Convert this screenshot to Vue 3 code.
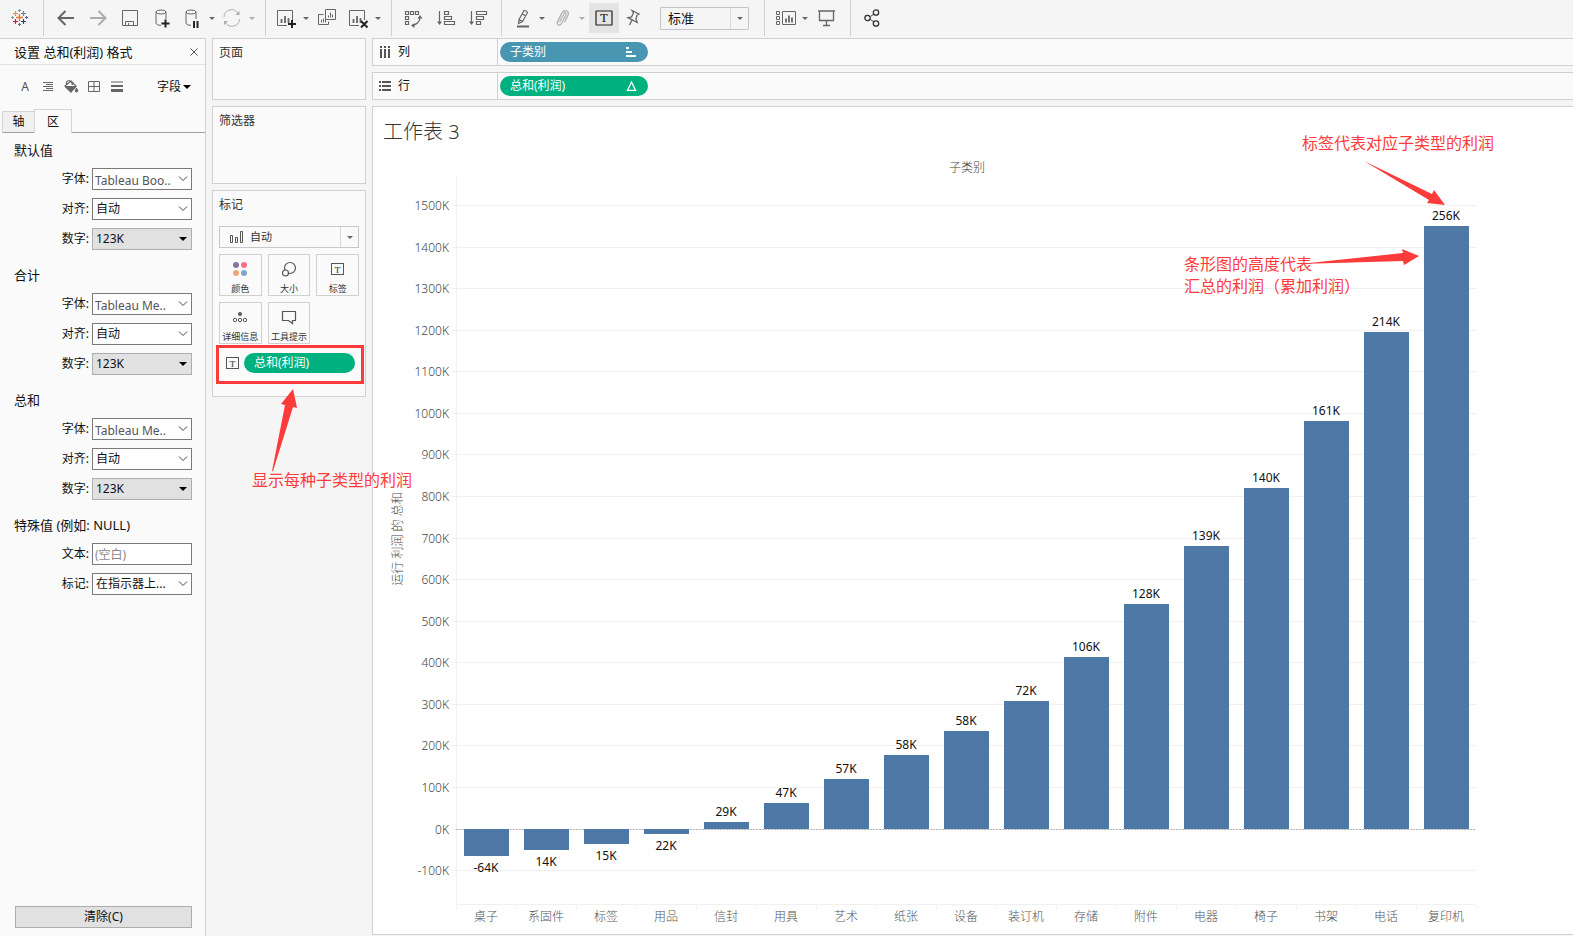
<template>
  <div class="workbook">
    <header class="toolbar">
      <div v-for="(group, g) in toolbar" :key="g" class="tool-group">
        <template v-for="(tool, t) in group" :key="t">
          <div v-if="tool.fit" class="fit-box">
            <select class="fit-select" aria-label="适合">
              <option>标准</option>
            </select>
            <span class="fit-arrow"><i class="caret"></i></span>
          </div>
          <template v-else>
            <button
              class="tool-btn"
              :class="{ split: tool.menu, faded: tool.faded, active: tool.active }"
              :aria-label="tool.name"
            >
              <svg class="icon" viewBox="0 0 24 24" v-html="icons[tool.icon]"></svg>
            </button>
            <button v-if="tool.menu" class="caret-btn" :class="{ faded: tool.faded }" :aria-label="tool.name + '菜单'">
              <i class="caret"></i>
            </button>
          </template>
        </template>
      </div>
    </header>

    <div class="workspace">
      <aside class="format-panel">
        <div class="format-header">
          <span>设置 总和(利润) 格式</span>
          <button class="close-btn" aria-label="关闭">
            <svg class="close-icon" viewBox="0 0 8 8"><path d="M0.5 0.5l7 7M7.5 0.5l-7 7" /></svg>
          </button>
        </div>

        <div class="format-tools">
          <button v-for="name in formatTools" :key="name" class="format-btn" :aria-label="name">
            <svg class="format-icon" viewBox="0 0 16 16" v-html="icons[name]"></svg>
          </button>
          <button class="field-btn">字段<i class="caret dark"></i></button>
        </div>

        <div class="tabs">
          <button class="tab">轴</button>
          <button class="tab selected">区</button>
          <span class="tab-rest"></span>
        </div>

        <section v-for="(section, s) in sections" :key="section.title" class="format-section">
          <h3>{{ section.title }}</h3>
          <div v-for="(row, r) in section.rows" :key="row.label" class="format-row">
            <label :for="`format-${s}-${r}`">{{ row.label }}:</label>
            <input v-if="row.input" :id="`format-${s}-${r}`" type="text" class="format-input" :placeholder="row.input" />
            <div v-else class="select-box">
              <select :id="`format-${s}-${r}`" :class="{ grey: row.grey, face: row.face }">
                <option>{{ row.value }}</option>
              </select>
              <i v-if="row.grey" class="caret dark"></i>
              <svg v-else class="chevron" viewBox="0 0 10 6"><path d="M1 0.5l4 4 4-4" /></svg>
            </div>
          </div>
        </section>

        <button class="clear-btn">清除(C)</button>
      </aside>

      <div class="cards">
        <section class="card pages"><h3>页面</h3></section>
        <section class="card filters"><h3>筛选器</h3></section>
        <section class="card marks">
          <h3>标记</h3>
          <div class="mark-type">
            <svg class="mark-bars" viewBox="0 0 14 12">
              <path d="M0.5 4.5h2v7h-2zM5.5 6.5h2v5h-2zM10.5 0.5h2v11h-2z" />
            </svg>
            <select aria-label="标记类型">
              <option>自动</option>
            </select>
            <span class="mark-arrow"><i class="caret"></i></span>
          </div>
          <div class="mark-grid">
            <button v-for="mark in marks" :key="mark.name" class="mark-btn">
              <svg class="mark-icon" viewBox="0 0 16 16" v-html="icons[mark.icon]"></svg>
              <span>{{ mark.name }}</span>
            </button>
          </div>
          <div class="mark-field">
            <svg class="mark-icon" viewBox="0 0 16 16" v-html="icons.label"></svg>
            <button class="pill green">总和(利润)</button>
          </div>
          <svg class="note">
            <rect x="4.5" y="155.5" width="145" height="36" fill="none" stroke="#fd3b3a" stroke-width="3" />
            <path d="M59 280L72 214 68 213 80 198 84 217 80 216 60 280z" />
            <text x="39" y="295">显示每种子类型的利润</text>
          </svg>
        </section>
      </div>

      <main class="view">
        <div class="shelf">
          <div class="shelf-name">
            <svg class="shelf-icon" viewBox="0 0 12 12"><path d="M1 0h2v2h-2zM5 0h2v2h-2zM9 0h2v2h-2zM1 3h2v9h-2zM5 3h2v9h-2zM9 3h2v9h-2z" /></svg>
            列
          </div>
          <button class="pill blue">
            子类别
            <svg class="pill-icon" viewBox="0 0 11 10"><path d="M0 0h3v2h-3zM0 4h6v2h-6zM0 8h10v2h-10z" fill="#fff" /></svg>
          </button>
        </div>
        <div class="shelf">
          <div class="shelf-name">
            <svg class="shelf-icon" viewBox="0 0 12 12"><path d="M0 1h2v2h-2zM0 5h2v2h-2zM0 9h2v2h-2zM3 1h9v2h-9zM3 5h9v2h-9zM3 9h9v2h-9z" /></svg>
            行
          </div>
          <button class="pill green">
            总和(利润)
            <svg class="pill-icon" viewBox="0 0 11 10"><path d="M5.5 1L9.5 9.3h-8z" fill="none" stroke="#fff" stroke-width="1.3" /></svg>
          </button>
        </div>

        <div class="sheet">
          <h2>工作表 3</h2>
          <svg class="chart" width="1130" height="776">
            <text class="axis-title" x="594" y="15">子类别</text>
            <text class="axis-title" transform="translate(29 382) rotate(-90)">运行 利润 的 总和</text>
            <g v-for="tick in ticks" :key="tick">
              <line class="grid" x1="79" x2="1103" :y1="crisp(tick)" :y2="crisp(tick)" />
              <text class="tick" x="76" :y="crisp(tick) + 4.5">{{ tick }}K</text>
            </g>
            <path class="grid" d="M83.5 20V752M83 747.5H1103" />
            <line class="zero" x1="83" x2="1103" :y1="crisp(0)" :y2="crisp(0)" />
            <g v-for="(bar, i) in bars" :key="bar.name">
              <rect class="bar" :x="91 + i * 60" :y="Math.round(yOf(Math.max(bar.total, 0)))" width="45" :height="Math.round(Math.abs(bar.total) * unit)" />
              <text class="value" :x="113 + i * 60" :y="labelY(bar.total)">{{ bar.label }}</text>
              <line class="grid" :x1="143.5 + i * 60" :x2="143.5 + i * 60" y1="748" y2="752" />
              <text class="category" :x="113 + i * 60" y="764">{{ bar.name }}</text>
            </g>
          </svg>
          <svg class="note sheet-note">
            <text x="929" y="42">标签代表对应子类型的利润</text>
            <path d="M991 54L1059 87 1061 83 1072 98 1054 96 1056 93z" />
            <text x="811" y="163">条形图的高度代表</text>
            <text x="811" y="185">汇总的利润（累加利润）</text>
            <path d="M927 157L1030 146 1029 142 1046 149 1031 158 1030 154z" />
          </svg>
        </div>
      </main>
    </div>
  </div>
</template>

<script setup>
const toolbar = [
  [{ icon: 'logo', name: '起始页' }],
  [
    { icon: 'back', name: '撤消' },
    { icon: 'forward', name: '重做', faded: true },
    { icon: 'save', name: '保存' },
    { icon: 'addData', name: '新建数据源' },
    { icon: 'pause', name: '暂停自动更新', menu: true },
    { icon: 'refresh', name: '运行更新', menu: true, faded: true },
  ],
  [
    { icon: 'newSheet', name: '新建工作表', menu: true },
    { icon: 'duplicate', name: '复制' },
    { icon: 'clearSheet', name: '清除工作表', menu: true },
  ],
  [
    { icon: 'swap', name: '交换行和列' },
    { icon: 'sortAsc', name: '升序排序' },
    { icon: 'sortDesc', name: '降序排序' },
  ],
  [
    { icon: 'pen', name: '突出显示', menu: true },
    { icon: 'clip', name: '组成员', menu: true, faded: true },
    { icon: 'text', name: '显示标记标签', active: true },
    { icon: 'pin', name: '固定轴' },
    { fit: true },
  ],
  [
    { icon: 'showCards', name: '显示卡', menu: true },
    { icon: 'present', name: '演示模式' },
  ],
  [{ icon: 'share', name: '共享' }],
]

const cylinder = '<ellipse cx="11" cy="6" rx="5" ry="2"/><path d="M6 6v11c0 1.5 2 2.3 5 2.3M16 6v7"/>'
const sheetBars = '<path d="M7.5 17v-4M11 17v-7M14.5 17v-5" stroke-width="1.8"/>'

const icons = {
  logo: `
    <path d="M11.5 8v7M8 11.5h7" stroke="#e8762d" stroke-width="1.4"/>
    <path d="M7.5 5v5M5 7.5h5" stroke="#eb912c" stroke-width="1.2"/>
    <path d="M15.5 5v5M13 7.5h5" stroke="#59879b" stroke-width="1.2"/>
    <path d="M7.5 13v5M5 15.5h5" stroke="#c72037" stroke-width="1.2"/>
    <path d="M15.5 13v5M13 15.5h5" stroke="#1f447e" stroke-width="1.2"/>
    <path d="M11.5 3v3M10 4.5h3M4.5 10v3M3 11.5h3" stroke="#7099a6"/>
    <path d="M18.5 10v3M17 11.5h3M11.5 17v3M10 18.5h3" stroke="#5c6692"/>`,
  back: '<path d="M20 12H5M11.5 5l-7 7 7 7" stroke-width="2"/>',
  forward: '<path d="M4 12h15M12.5 5l7 7-7 7" stroke-width="2"/>',
  save: '<path d="M4.5 4.5h15v15h-15zM7.5 19.5v-4h8v4M10.5 17v2.5"/>',
  addData: cylinder + '<path d="M15.5 13.5v8M11.5 17.5h8" stroke="#222" stroke-width="2"/>',
  pause: cylinder + '<path d="M14 15v7M17.5 15v7" stroke="#222" stroke-width="2"/>',
  refresh: '<path d="M4 11a7.5 7.5 0 0 1 14-3.5M19.5 13a7.5 7.5 0 0 1-14 3.5"/><path d="M19.5 5v4h-4zM4 19v-4h4z" fill="currentColor" stroke="none"/>',
  newSheet: '<path d="M13 19.5H3.5v-15h15V14"/>' + sheetBars + '<path d="M18 14v8M14 18h8" stroke="#222" stroke-width="2"/>',
  duplicate: '<path d="M9.500 3.5h10v10h-10zM7.5 8.5h-5v10h10v-3M12.5 11.5v-2M14.5 11.5v-5M16.5 11.5v-3M5.5 16.5v-3M7.5 16.5v-4M9.5 16.5v-3"/>',
  clearSheet: '<path d="M13 19.5H3.5v-15h15V14"/>' + sheetBars + '<path d="M15 15l6.5 6.5M21.5 15L15 21.5" stroke="#222" stroke-width="2"/>',
  swap: '<path d="M3.5 5.5h3v3h-3zM8.5 5.5h3v3h-3zM13.5 5.5h3v3h-3zM3.5 10.5h3v3h-3zM3.5 15.5h3v3h-3zM18 11c0 4-3 7.500-8 8.500" stroke-width="1.2"/><path d="M15.500 12.500L18 9l2.500 3.500zM12.500 17l-3.500 2.500 3.500 2.500z" fill="currentColor" stroke="none"/>',
  sortAsc: '<path d="M5.5 5v13M10.5 5.5h4v3h-4zM10.5 10.5h7v3h-7zM10.5 15.5h10v3h-10z" stroke-width="1.2"/><path d="M3 15.5h5L5.5 19z" fill="currentColor" stroke="none"/>',
  sortDesc: '<path d="M5.5 5v13M10.5 5.5h10v3h-10zM10.5 10.5h7v3h-7zM10.5 15.5h4v3h-4z" stroke-width="1.2"/><path d="M3 15.5h5L5.5 19z" fill="currentColor" stroke="none"/>',
  pen: '<path d="M14 4.5q2.500 0 3.500 2l-5 9-3.500-2zM9 13.500l-.5 4 4-2M12.500 8l3.500 2" stroke-width="1.2"/><path d="M7 20.5h12" stroke-width="2"/>',
  clip: '<path d="M9.500 16l4.500-8.500c1-1.700 3-.7 2 1.200l-4.500 8.800c-1.800 3-5.500 1.200-4-1.800l4.500-9c2.300-4 8-1.500 6 2.500l-3.500 7" stroke-width="1.2"/>',
  text: '<rect x="4" y="5" width="16" height="14" rx="0.5" stroke="#222" stroke-width="1.2"/><text x="12" y="16" font-family="Liberation Serif" font-size="12" text-anchor="middle" fill="#222" stroke="#222" stroke-width="0.2">T</text>',
  pin: '<path d="M8 4.500l7 3.500-2 1.200-1 4 1.200 3.300-9.200-4.800 3.500-.7 2-4zM8 14l-2.500 5" stroke-width="1.3"/>',
  showCards: '<path d="M3.5 5.5h3v3h-3zM3.5 10.5h3v3h-3zM3.5 15.5h3v3h-3zM9.5 5.5h13v13h-13z"/><path d="M13 16.5v-4M16 16.5v-7M19 16.5v-5" stroke-width="1.8"/>',
  present: '<path d="M3 5h17M4.5 5v9.5h14V5M11.5 14.5v5M8 19.5h7" stroke-width="1.3"/>',
  share: '<path d="M10.5 10.5l3.5-2.5M10.5 13.5l3.5 2.5" stroke="#333"/><g stroke="#333" stroke-width="1.3"><circle cx="16" cy="6.5" r="2.7"/><circle cx="7.5" cy="12" r="2.7"/><circle cx="16" cy="17.5" r="2.7"/></g>',
  font: '<text x="8" y="12" font-family="Noto Sans" font-size="12" text-anchor="middle" fill="#555" stroke="none">A</text>',
  align: '<path d="M3 3.5h10M6 5.5h7M3 7.5h10M6 9.5h7M3 11.5h10"/>',
  shading: '<path d="M2 7l6-5 5 5-5 6zM3.500 6V3q2-2.500 5 0l1 3" stroke-width="1.2"/><path d="M2 7.500h11l-5 5.500zM13.500 9q2.500 4 0 4t0-4z" fill="currentColor"/>',
  borders: '<path d="M2.5 2.5h11v10h-11zM8 2.5v10M2.5 7.5h11"/>',
  lines: '<path d="M2 3h12"/><path d="M2 7h12" stroke-width="2"/><path d="M2 11.5h12" stroke-width="3"/>',
  colour: '<g stroke="none"><circle cx="4" cy="4" r="3" fill="#8a73a0"/><circle cx="12" cy="4" r="3" fill="#fb7185"/><circle cx="4" cy="12" r="3" fill="#f2a57b"/><circle cx="12" cy="12" r="3" fill="#82a3ca"/></g>',
  size: '<circle cx="9" cy="7" r="5.5" stroke-width="1.2"/><circle cx="4.5" cy="12" r="3" fill="#fafafa" stroke-width="1.2"/>',
  label: '<rect x="1.5" y="2.5" width="12" height="11"/><text x="7.5" y="11.5" font-family="Liberation Serif" font-size="9" text-anchor="middle" fill="#444" stroke="#444" stroke-width="0.2">T</text>',
  detail: '<circle cx="8" cy="5" r="2" fill="currentColor" stroke="none"/><circle cx="3" cy="11" r="1.7"/><circle cx="8" cy="11" r="1.7"/><circle cx="13" cy="11" r="1.7"/>',
  tooltip: '<path d="M1.5 2.5h13v9h-3v3l-4-3h-6z" stroke-width="1.2"/>',
}

const formatTools = ['font', 'align', 'shading', 'borders', 'lines']

const formatRows = (font) => [
  { label: '字体', value: font, face: true },
  { label: '对齐', value: '自动' },
  { label: '数字', value: '123K', grey: true },
]

const sections = [
  { title: '默认值', rows: formatRows('Tableau Boo..') },
  { title: '合计', rows: formatRows('Tableau Me..') },
  { title: '总和', rows: formatRows('Tableau Me..') },
  {
    title: '特殊值 (例如: NULL)',
    rows: [
      { label: '文本', input: '(空白)' },
      { label: '标记', value: '在指示器上...' },
    ],
  },
]

const marks = [
  { name: '颜色', icon: 'colour' },
  { name: '大小', icon: 'size' },
  { name: '标签', icon: 'label' },
  { name: '详细信息', icon: 'detail' },
  { name: '工具提示', icon: 'tooltip' },
]

// total is the running sum of profit in thousands
const bars = [
  { name: '桌子', label: '-64K', total: -64 },
  { name: '系固件', label: '14K', total: -50 },
  { name: '标签', label: '15K', total: -35 },
  { name: '用品', label: '22K', total: -12 },
  { name: '信封', label: '29K', total: 17 },
  { name: '用具', label: '47K', total: 63 },
  { name: '艺术', label: '57K', total: 120 },
  { name: '纸张', label: '58K', total: 178 },
  { name: '设备', label: '58K', total: 236 },
  { name: '装订机', label: '72K', total: 308 },
  { name: '存储', label: '106K', total: 413 },
  { name: '附件', label: '128K', total: 541 },
  { name: '电器', label: '139K', total: 680 },
  { name: '椅子', label: '140K', total: 820 },
  { name: '书架', label: '161K', total: 981 },
  { name: '电话', label: '214K', total: 1195 },
  { name: '复印机', label: '256K', total: 1450 },
]

const ticks = Array.from({ length: 17 }, (_, i) => 1500 - i * 100)
const unit = 0.4157

const yOf = (value) => 672 - value * unit
const crisp = (value) => Math.floor(yOf(value)) + 0.5
const labelY = (total) => Math.round(yOf(total)) + (total < 0 ? 16 : -6)
</script>

<style>
body {
  margin: 0;
}
</style>

<style scoped>
.workbook {
  display: flex;
  flex-direction: column;
  min-height: 100vh;
  background: #f5f5f5;
  color: #111;
  font-family: 'Noto Sans', 'Noto Sans CJK SC', sans-serif;
  font-size: 12px;
  line-height: 20px;
  overflow: hidden;
}

button,
select,
input {
  margin: 0;
  padding: 0;
  border: none;
  border-radius: 0;
  background: none;
  color: inherit;
  font: inherit;
}

select {
  appearance: none;
}

h2,
h3 {
  margin: 0;
  font-size: 12px;
  font-weight: 400;
}

svg {
  display: block;
  fill: none;
}

.caret {
  border: 3px solid transparent;
  border-top-color: #666;
  border-bottom: none;
}

.caret.dark {
  border-width: 4px;
  border-top-color: #000;
  border-bottom: none;
}

/* toolbar */
.toolbar {
  display: flex;
  height: 36px;
  padding-bottom: 2px;
}

.tool-group {
  display: flex;
  align-items: center;
  gap: 2px;
  padding: 0 8px 0 7px;
  border-right: 1px solid #d0d0d0;
}

.tool-group:first-child {
  padding-left: 5px;
}

.tool-group:last-child {
  padding-left: 6px;
  border-right: none;
}

.tool-btn {
  display: flex;
  align-items: center;
  justify-content: center;
  width: 30px;
  height: 30px;
  color: #666;
}

.tool-btn.split {
  width: 26px;
}

.tool-btn.active {
  background: #e4e4e4;
}

.faded {
  opacity: 0.5;
}

.icon {
  flex: none;
  width: 24px;
  height: 24px;
  stroke: currentColor;
  overflow: visible;
}

.caret-btn {
  display: flex;
  align-items: center;
  justify-content: center;
  width: 10px;
  height: 30px;
}

.fit-box {
  display: flex;
  width: 87px;
  height: 21px;
  margin: 0 7px;
  border: 1px solid #c4c4c4;
  border-radius: 1px;
}

.fit-select {
  flex: 1;
  min-width: 0;
  padding-left: 7px;
  font-size: 13px;
  line-height: 20px;
}

.fit-arrow {
  display: flex;
  align-items: center;
  justify-content: center;
  width: 17px;
  border-left: 1px solid #d8d8d8;
}

/* format panel */
.workspace {
  display: flex;
  flex: 1;
}

.format-panel {
  display: flex;
  flex-direction: column;
  flex: none;
  box-sizing: border-box;
  width: 206px;
  padding-bottom: 8px;
  border-top: 1px solid #d0d0d0;
  border-right: 1px solid #d0d0d0;
  background: #fafafa;
}

.format-header {
  display: flex;
  align-items: center;
  justify-content: space-between;
  height: 25px;
  padding: 0 7px 0 14px;
  border-bottom: 1px solid #e2e2e2;
  font-size: 13px;
}

.close-icon {
  width: 8px;
  height: 8px;
  stroke: #555;
}

.format-tools {
  display: flex;
  align-items: center;
  gap: 7px;
  height: 44px;
  padding: 0 14px 0 17px;
}

.format-btn {
  color: #666;
}

.format-icon {
  width: 16px;
  height: 16px;
  stroke: currentColor;
}

.field-btn {
  display: flex;
  align-items: center;
  gap: 2px;
  margin-left: auto;
}

.tabs {
  display: flex;
  align-items: flex-end;
  height: 24px;
  padding-left: 2px;
}

.tab {
  box-sizing: border-box;
  width: 32px;
  height: 22px;
  border: 1px solid #d4d4d4;
  border-right: none;
  border-bottom-color: #a0a0a0;
  background: #f0f0f0;
}

.tab.selected {
  width: 38px;
  height: 24px;
  border-right: 1px solid #d4d4d4;
  border-bottom: none;
  background: #fafafa;
}

.tab-rest {
  flex: 1;
  border-bottom: 1px solid #a0a0a0;
}

.format-section {
  display: flex;
  flex-direction: column;
  gap: 8px;
  padding: 7px 13px 8px 14px;
}

.format-section h3 {
  font-size: 13px;
  line-height: 20px;
}

.format-row {
  display: flex;
  align-items: center;
  gap: 3px;
  height: 22px;
}

.format-row label {
  flex: 1;
  line-height: 22px;
  text-align: right;
}

.select-box {
  display: grid;
  align-items: center;
  width: 100px;
}

.select-box > * {
  grid-area: 1 / 1;
}

.select-box select,
.format-input {
  box-sizing: border-box;
  width: 100px;
  height: 22px;
  padding: 0 3px;
  border: 1px solid #7a7a7a;
  background: #fff;
}

.select-box select.grey {
  border-color: #adadad;
  background: #e1e1e1;
}

.select-box select.face {
  padding: 2px 2px 0;
  color: #555;
}

.format-input {
  padding: 0 2px;
}

.format-input::placeholder {
  color: #888;
}

.select-box .caret,
.chevron {
  justify-self: end;
  margin-right: 5px;
  pointer-events: none;
}

.chevron {
  width: 10px;
  height: 6px;
  margin-right: 4px;
  stroke: #444;
}

.clear-btn {
  height: 22px;
  margin: auto 13px 0 15px;
  border: 1px solid #adadad;
  background: #e1e1e1;
  line-height: 20px;
}

/* shelf cards */
.cards {
  display: flex;
  flex-direction: column;
  flex: none;
  gap: 6px;
  width: 154px;
  margin: 0 6px;
}

.card {
  box-sizing: border-box;
  padding: 4px 6px;
  border: 1px solid #d0d0d0;
  background: #fafafa;
  color: #333;
}

.pages {
  height: 62px;
}

.filters {
  height: 78px;
}

.marks {
  position: relative;
  height: 207px;
}

.mark-type {
  display: flex;
  align-items: center;
  box-sizing: border-box;
  height: 22px;
  margin: 11px 0 6px;
  padding-left: 10px;
  border: 1px solid #c8c8c8;
}

.mark-bars {
  width: 14px;
  height: 12px;
  stroke: #555;
}

.mark-type select {
  flex: 1;
  min-width: 0;
  padding-left: 6px;
  font-size: 11px;
  line-height: 18px;
}

.mark-arrow {
  display: flex;
  align-items: center;
  justify-content: center;
  width: 17px;
  height: 20px;
  border-left: 1px solid #d8d8d8;
}

.mark-grid {
  display: grid;
  grid-template-columns: repeat(3, 1fr);
  gap: 6px;
}

.mark-btn {
  display: flex;
  flex-direction: column;
  align-items: center;
  justify-content: space-between;
  height: 42px;
  padding-top: 6px;
  border: 1px solid #d0d0d0;
  font-size: 9px;
  line-height: 12px;
  white-space: nowrap;
}

.mark-icon {
  flex: none;
  width: 16px;
  height: 16px;
  color: #555;
  stroke: currentColor;
}

.mark-field {
  display: flex;
  align-items: center;
  gap: 3px;
  margin-top: 9px;
  padding: 0 4px 0 6px;
}

.pill {
  display: flex;
  align-items: center;
  justify-content: space-between;
  width: 148px;
  height: 20px;
  padding: 0 11px 1px 10px;
  border-radius: 10px;
  color: #fff;
}

.mark-field .pill {
  flex: 1;
}

.pill.green {
  background: #00b180;
}

.pill.blue {
  background: #4996b2;
}

.pill-icon {
  width: 11px;
  height: 10px;
}

.note {
  position: absolute;
  z-index: 2;
  top: 0;
  left: 0;
  overflow: visible;
  fill: #fd3b3a;
  font-size: 16px;
  pointer-events: none;
}

/* worksheet */
.view {
  display: flex;
  flex-direction: column;
  flex: 1;
  gap: 6px;
  min-width: 0;
}

.shelf {
  display: flex;
  align-items: center;
  gap: 2px;
  box-sizing: border-box;
  height: 28px;
  border: 1px solid #d0d0d0;
  border-right: none;
  background: #fafafa;
}

.shelf-name {
  display: flex;
  align-items: center;
  gap: 7px;
  width: 118px;
  height: 26px;
  padding-left: 6px;
  border-right: 1px solid #d0d0d0;
}

.shelf-icon {
  width: 12px;
  height: 12px;
  fill: #555;
}

.sheet {
  position: relative;
  flex: 1;
  margin-bottom: 1px;
  border: 1px solid #d0d0d0;
  border-right: none;
  background: #fff;
}

.sheet h2 {
  height: 50px;
  padding-left: 10px;
  color: #333;
  font-size: 20px;
  font-weight: 300;
  line-height: 50px;
}

.sheet-note {
  width: 100%;
  height: 100%;
}

.chart text {
  font-size: 12px;
}

.chart .axis-title {
  fill: #444;
  font-weight: 300;
  text-anchor: middle;
}

.chart .tick {
  fill: #444;
  font-weight: 300;
  text-anchor: end;
}

.chart .value {
  fill: #111;
  text-anchor: middle;
}

.chart .category {
  fill: #555;
  font-weight: 300;
  text-anchor: middle;
}

.grid {
  stroke: #f0f0f0;
}

.zero {
  stroke: #b8b8b8;
  stroke-dasharray: 2 1;
}

.bar {
  fill: #4e79a7;
}
</style>
